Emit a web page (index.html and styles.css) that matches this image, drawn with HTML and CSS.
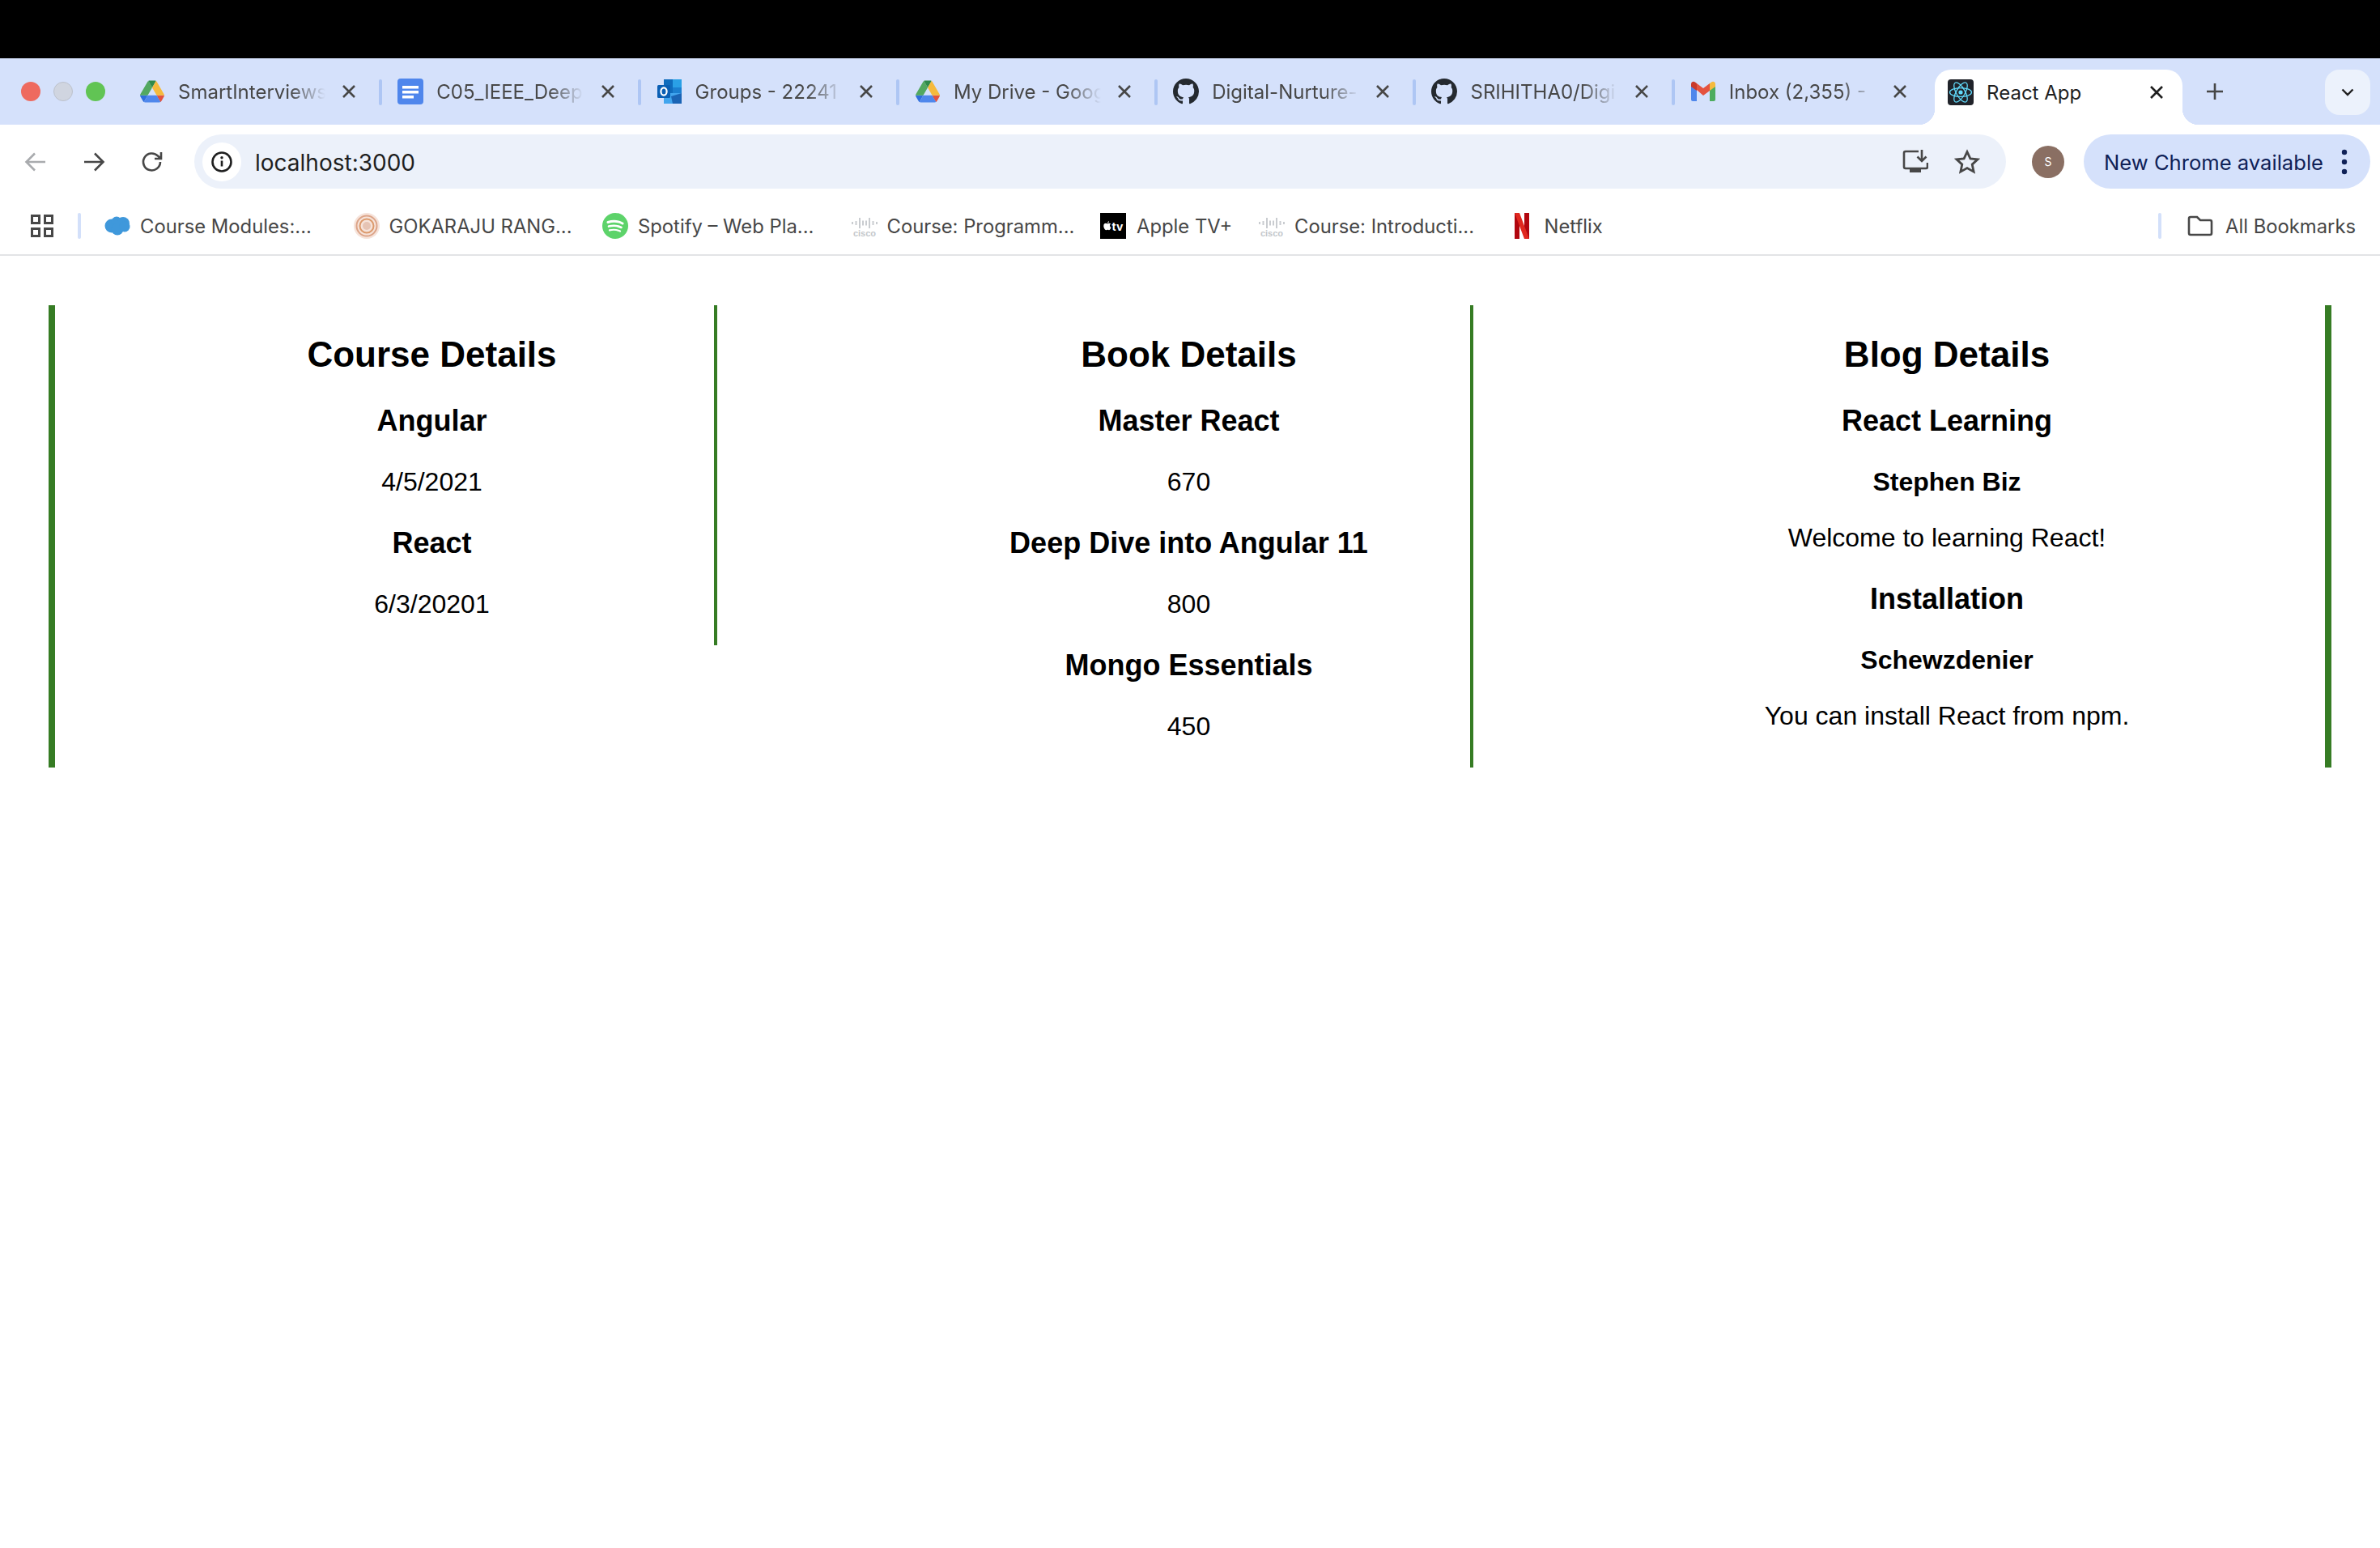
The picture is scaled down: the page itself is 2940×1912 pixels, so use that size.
FILE: index.html
```html
<!DOCTYPE html>
<html lang="en">
<head>
    <meta charset="UTF-8">
    <meta name="viewport" content="width=device-width, initial-scale=1.0">
    <title>React App</title>
    <link rel="stylesheet" href="styles.css">
</head>
<body>
    <!-- icon sprite -->
    <svg class="sprite" aria-hidden="true">
        <symbol id="i-drive" viewBox="-3 -3 93.3 84">
            <path d="m6.6 66.85 3.85 6.65c.8 1.4 1.95 2.5 3.3 3.3l13.75-23.8h-27.5c0 1.55.4 3.1 1.2 4.5z" fill="#2f6fdc"/>
            <path d="m43.65 25-13.75-23.8c-1.35.8-2.5 1.9-3.3 3.3l-25.4 44a9.06 9.06 0 0 0 -1.2 4.5h27.5z" fill="#52a860"/>
            <path d="m73.55 76.8c1.35-.8 2.5-1.9 3.3-3.3l1.6-2.75 7.65-13.25c.8-1.4 1.2-2.95 1.2-4.5h-27.502l5.852 11.5z" fill="#e4523f"/>
            <path d="m43.65 25 13.75-23.8c-1.35-.8-2.9-1.2-4.5-1.2h-18.5c-1.6 0-3.15.45-4.5 1.2z" fill="#2f8a4a"/>
            <path d="m59.8 53h-32.3l-13.75 23.8c1.35.8 2.9 1.2 4.5 1.2h50.8c1.6 0 3.15-.45 4.5-1.2z" fill="#4f87ec"/>
            <path d="m73.4 26.5-12.7-22c-.8-1.4-1.95-2.5-3.3-3.3l-13.75 23.8 16.15 28h27.45c0-1.55-.4-3.1-1.2-4.5z" fill="#f5ba3d"/>
        </symbol>
        <symbol id="i-docs" viewBox="0 0 32 32">
            <rect x="0" y="0" width="32" height="32" rx="4" fill="#4f86ec"/>
            <rect x="6" y="9" width="20" height="3.5" fill="#fff"/>
            <rect x="6" y="15" width="20" height="3.5" fill="#fff"/>
            <rect x="6" y="21" width="14" height="3.5" fill="#fff"/>
        </symbol>
        <symbol id="i-outlook" viewBox="0 0 32 32">
            <rect x="9" y="1" width="11" height="10" fill="#0f6cbd"/>
            <rect x="20" y="1" width="11" height="10" fill="#2aa0e6"/>
            <rect x="9" y="11" width="11" height="10" fill="#0f6cbd"/>
            <rect x="20" y="11" width="11" height="10" fill="#1b7fd0"/>
            <path d="M9 18h22v13H9z" fill="#41a5ee"/>
            <path d="M18 22l13-4v13H20z" fill="#1a64b5"/>
            <rect x="1" y="8" width="16" height="16" rx="1.5" fill="#0a5fb4"/>
            <ellipse cx="9" cy="16" rx="3.6" ry="4.6" fill="none" stroke="#fff" stroke-width="2.2"/>
        </symbol>
        <symbol id="i-github" viewBox="0 0 16 16">
            <path fill="#24292f" d="M8 0C3.58 0 0 3.58 0 8c0 3.54 2.29 6.53 5.47 7.59.4.07.55-.17.55-.38 0-.19-.01-.82-.01-1.49-2.01.37-2.53-.49-2.69-.94-.09-.23-.48-.94-.82-1.13-.28-.15-.68-.52-.01-.53.63-.01 1.08.58 1.23.82.72 1.21 1.87.87 2.33.66.07-.52.28-.87.51-1.07-1.78-.2-3.64-.89-3.64-3.95 0-.87.31-1.59.82-2.15-.08-.2-.36-1.02.08-2.12 0 0 .67-.21 2.2.82.64-.18 1.32-.27 2-.27.68 0 1.36.09 2 .27 1.53-1.04 2.2-.82 2.2-.82.44 1.1.16 1.92.08 2.12.51.56.82 1.27.82 2.15 0 3.07-1.87 3.75-3.65 3.95.29.25.54.73.54 1.48 0 1.07-.01 1.93-.01 2.2 0 .21.15.46.55.38A8.013 8.013 0 0016 8c0-4.42-3.58-8-8-8z"/>
        </symbol>
        <symbol id="i-gmail" viewBox="0 0 32 26">
            <path d="M1 25V6l7 5v14H3a2 2 0 0 1-2-2z" fill="#4f87ec"/>
            <path d="M31 25V6l-7 5v14h5a2 2 0 0 0 2-2z" fill="#4dac5f"/>
            <path d="M24 3v9l7-5V4c0-3-3-4-5-2.5z" fill="#f5ba3d"/>
            <path d="M8 11V3l8 6 8-6v9l-8 6z" fill="#e4523f"/>
            <path d="M1 7V4c0-3 3-4 5-2.5L8 3v9z" fill="#c9392b"/>
        </symbol>
        <symbol id="i-react" viewBox="0 0 32 32">
            <rect width="32" height="32" rx="4" fill="#20232a"/>
            <g fill="none" stroke="#61dafb" stroke-width="1.3">
                <ellipse cx="16" cy="16" rx="13.5" ry="5.4"/>
                <ellipse cx="16" cy="16" rx="13.5" ry="5.4" transform="rotate(60 16 16)"/>
                <ellipse cx="16" cy="16" rx="13.5" ry="5.4" transform="rotate(120 16 16)"/>
            </g>
            <circle cx="16" cy="16" r="2.6" fill="#61dafb"/>
        </symbol>
        <symbol id="i-close" viewBox="0 0 22 22">
            <path d="M4 4l14 14M18 4L4 18" fill="none" stroke="currentColor" stroke-width="2.6"/>
        </symbol>
        <symbol id="i-salesforce" viewBox="0 0 32 24">
            <g fill="#3f98db">
                <circle cx="9" cy="12" r="8.5"/>
                <circle cx="15" cy="7" r="6.5"/>
                <circle cx="23" cy="9" r="8"/>
                <circle cx="16" cy="16" r="7.5"/>
                <circle cx="25" cy="13" r="6.5"/>
            </g>
        </symbol>
        <symbol id="i-seal" viewBox="0 0 32 32">
            <circle cx="16" cy="16" r="16" fill="#f6e3da"/>
            <circle cx="16" cy="16" r="12.500" fill="none" stroke="#dca488" stroke-width="2"/>
            <circle cx="16" cy="16" r="8.500" fill="none" stroke="#dc9a6c" stroke-width="2"/>
            <circle cx="16" cy="16" r="5" fill="#e6c4b4"/>
        </symbol>
        <symbol id="i-spotify" viewBox="0 0 32 32">
            <circle cx="16" cy="16" r="16" fill="#5dd36a"/>
            <g fill="none" stroke="#fff" stroke-linecap="round">
                <path d="M7 11.5c6-1.8 13-1.3 18 1.5" stroke-width="3"/>
                <path d="M8 16.6c5.2-1.4 11-1 15.5 1.4" stroke-width="2.6"/>
                <path d="M9 21.4c4.4-1.1 9-.8 13 1.2" stroke-width="2.2"/>
            </g>
        </symbol>
        <symbol id="i-cisco" viewBox="0 0 32 32">
            <g stroke="#c9ccd0" stroke-width="2">
                <path d="M1 11v3M5.500 10v5M10 6v13M14 9.500v6M18 9.500v6M22 6v13M26.500 10v5M31 11v3"/>
            </g>
            <text class="cisco-word" x="16" y="29" text-anchor="middle">cisco</text>
        </symbol>
        <symbol id="i-netflix" viewBox="0 0 18 32">
            <path d="M0 0h6v32l-6 0z" fill="#b1060f"/>
            <path d="M12 0h6v32h-6z" fill="#b1060f"/>
            <path d="M0 0h6l12 32h-6z" fill="#e0281f"/>
        </symbol>
    </svg>

    <header class="browser">
        <div class="notch-bar"></div>

        <div class="tab-strip">
            <div class="window-lights">
                <span class="light light-red"></span>
                <span class="light light-grey"></span>
                <span class="light light-green"></span>
            </div>
            <div class="tab">
                <svg class="favicon"><use href="#i-drive"/></svg>
                <span class="tab-title">SmartInterviews</span>
                <svg class="tab-close"><use href="#i-close"/></svg>
            </div>
            <div class="tab">
                <svg class="favicon"><use href="#i-docs"/></svg>
                <span class="tab-title">C05_IEEE_Deep</span>
                <svg class="tab-close"><use href="#i-close"/></svg>
            </div>
            <div class="tab">
                <svg class="favicon"><use href="#i-outlook"/></svg>
                <span class="tab-title">Groups - 22241</span>
                <svg class="tab-close"><use href="#i-close"/></svg>
            </div>
            <div class="tab">
                <svg class="favicon"><use href="#i-drive"/></svg>
                <span class="tab-title">My Drive - Goog</span>
                <svg class="tab-close"><use href="#i-close"/></svg>
            </div>
            <div class="tab">
                <svg class="favicon"><use href="#i-github"/></svg>
                <span class="tab-title">Digital-Nurture-</span>
                <svg class="tab-close"><use href="#i-close"/></svg>
            </div>
            <div class="tab">
                <svg class="favicon"><use href="#i-github"/></svg>
                <span class="tab-title">SRIHITHA0/Digi</span>
                <svg class="tab-close"><use href="#i-close"/></svg>
            </div>
            <div class="tab tab-last">
                <svg class="favicon"><use href="#i-gmail"/></svg>
                <span class="tab-title">Inbox (2,355) -</span>
                <svg class="tab-close"><use href="#i-close"/></svg>
            </div>
            <div class="tab tab-active">
                <svg class="favicon"><use href="#i-react"/></svg>
                <span class="tab-title">React App</span>
                <svg class="tab-close"><use href="#i-close"/></svg>
            </div>
            <svg class="new-tab" viewBox="0 0 20 20">
                <path d="M10 0v20M0 10h20" fill="none" stroke="#474747" stroke-width="2.6"/>
            </svg>
            <div class="tab-search">
                <svg viewBox="0 0 16 10"><path d="M1.5 1.5L8 8l6.5-6.5" fill="none" stroke="#1f1f1f" stroke-width="2.4"/></svg>
            </div>
        </div>

        <div class="toolbar">
            <div class="nav-btn nav-off">
                <svg viewBox="0 0 28 28"><path d="M26 14H3M13 3.500L2.500 14 13 24.500" fill="none" stroke="currentColor" stroke-width="2.600"/></svg>
            </div>
            <div class="nav-btn">
                <svg viewBox="0 0 28 28"><path d="M2 14h23M15 3.500L25.500 14 15 24.500" fill="none" stroke="currentColor" stroke-width="2.600"/></svg>
            </div>
            <div class="nav-btn">
                <svg viewBox="0 0 28 28"><path d="M24 14a10.500 10.500 0 1 1-3-7.400L25 10M25 2v8h-8" fill="none" stroke="currentColor" stroke-width="2.600"/></svg>
            </div>
            <div class="address-bar">
                <span class="site-info">
                    <svg viewBox="0 0 28 28">
                        <circle cx="14" cy="14" r="11.500" fill="none" stroke="#1f1f1f" stroke-width="2.600"/>
                        <path d="M14 12.500v7" stroke="#1f1f1f" stroke-width="2.600"/>
                        <circle cx="14" cy="8.800" r="1.700" fill="#1f1f1f"/>
                    </svg>
                </span>
                <span class="address-text">localhost:3000</span>
                <svg class="bar-icon" viewBox="0 0 32 32">
                    <path d="M20 3H4a2 2 0 0 0-2 2v17a2 2 0 0 0 2 2h25a2 2 0 0 0 2-2v-5" fill="none" stroke="#474747" stroke-width="2.600"/>
                    <path d="M24 1v13M18.500 9.500L24 15l5.500-5.500" fill="none" stroke="#474747" stroke-width="2.600"/>
                    <rect x="9" y="24" width="14" height="5" fill="#474747"/>
                </svg>
                <svg class="bar-icon" viewBox="0 0 32 32">
                    <path d="M16 3.500l3.900 8.400 9.100 1-6.800 6.200 1.900 9-8.100-4.600-8.100 4.600 1.900-9L3 12.900l9.100-1z" fill="none" stroke="#474747" stroke-width="2.800"/>
                </svg>
            </div>
            <span class="avatar">S</span>
            <div class="update-chip">
                <span>New Chrome available</span>
                <svg viewBox="0 0 8 32"><g fill="#0f2157"><circle cx="4" cy="4" r="3.200"/><circle cx="4" cy="16" r="3.200"/><circle cx="4" cy="28" r="3.200"/></g></svg>
            </div>
        </div>

        <nav class="bookmarks">
            <svg class="apps-icon" viewBox="0 0 28 28">
                <g fill="none" stroke="#474747" stroke-width="3">
                    <rect x="1.500" y="1.500" width="9" height="9"/>
                    <rect x="17.500" y="1.500" width="9" height="9"/>
                    <rect x="1.500" y="17.500" width="9" height="9"/>
                    <rect x="17.500" y="17.500" width="9" height="9"/>
                </g>
            </svg>
            <span class="bm-sep"></span>
            <a class="bm-item bm-first"><svg class="bm-icon"><use href="#i-salesforce"/></svg>Course Modules:...</a>
            <a class="bm-item"><svg class="bm-icon"><use href="#i-seal"/></svg>GOKARAJU RANG...</a>
            <a class="bm-item"><svg class="bm-icon"><use href="#i-spotify"/></svg>Spotify – Web Pla...</a>
            <a class="bm-item"><svg class="bm-icon"><use href="#i-cisco"/></svg>Course: Programm...</a>
            <a class="bm-item bm-auto">
                <span class="tv-icon">
                    <svg viewBox="0 0 10 12"><path d="M7.300 2.700c-1 0-1.600.6-2.300.6s-1.300-.6-2.200-.6C1.500 2.700.3 3.800.3 6c0 2.500 1.700 5.200 3 5.200.7 0 1-.4 1.800-.4s1 .4 1.800.4c1 0 2-1.700 2.600-3.200-1.800-.7-2-3.900-.2-4.700-.5-.4-1.200-.6-2-.6zM5 2.500C5 1.300 6 .3 7 .2c.1 1.200-1 2.400-2 2.300z" fill="#fff"/></svg>
                    <span>tv</span>
                </span>
                Apple TV+
            </a>
            <a class="bm-item"><svg class="bm-icon"><use href="#i-cisco"/></svg>Course: Introducti...</a>
            <a class="bm-item bm-auto bm-netflix"><svg class="bm-icon"><use href="#i-netflix"/></svg>Netflix</a>
            <span class="bm-sep bm-sep-right"></span>
            <a class="bm-all">
                <svg class="bm-icon" viewBox="0 0 32 28"><path d="M2 5a2 2 0 0 1 2-2h8l4 4h12a2 2 0 0 1 2 2v14a2 2 0 0 1-2 2H4a2 2 0 0 1-2-2z" fill="none" stroke="#474747" stroke-width="2.600"/></svg>
                All Bookmarks
            </a>
        </nav>
    </header>

    <main class="details">
        <section class="col col-course">
            <h2>Course Details</h2>
            <h3>Angular</h3>
            <p>4/5/2021</p>
            <h3>React</h3>
            <p>6/3/20201</p>
        </section>
        <section class="col col-book">
            <h2>Book Details</h2>
            <h3>Master React</h3>
            <p>670</p>
            <h3>Deep Dive into Angular 11</h3>
            <p>800</p>
            <h3>Mongo Essentials</h3>
            <p>450</p>
        </section>
        <section class="col col-blog">
            <h2>Blog Details</h2>
            <h3>React Learning</h3>
            <h4>Stephen Biz</h4>
            <p>Welcome to learning React!</p>
            <h3>Installation</h3>
            <h4>Schewzdenier</h4>
            <p>You can install React from npm.</p>
        </section>
    </main>
</body>
</html>
```

FILE: styles.css
```css
* {
    box-sizing: border-box;
}

body {
    margin: 0;
    background-color: #fff;
    color: #000;
    font-family: "Liberation Sans", Arial, sans-serif;
}

.sprite {
    display: none;
}

/* browser chrome */
.browser {
    font-family: Inter, "Noto Sans", sans-serif;
    color: #474747;
}

.notch-bar {
    height: 72px;
    background-color: #000;
}

.tab-strip {
    display: flex;
    align-items: flex-start;
    height: 82px;
    background-color: #d5e1fb;
}

.window-lights {
    display: flex;
    gap: 16px;
    width: 151px;
    padding: 29px 0 0 26px;
}

.light {
    width: 24px;
    height: 24px;
    border-radius: 50%;
}

.light-red {
    background-color: #ee6a5f;
}

.light-grey {
    background-color: #d0d5e0;
    border: 1px solid #bcc1cc;
}

.light-green {
    background-color: #61c454;
}

.tab {
    position: relative;
    display: flex;
    align-items: center;
    flex: none;
    width: 319.300px;
    height: 54px;
    margin-top: 14px;
    padding: 0 28px 0 21px;
    font-size: 24px;
}

.tab::after {
    content: "";
    position: absolute;
    top: 12px;
    right: -2px;
    width: 4px;
    height: 32px;
    border-radius: 2px;
    background-color: #aec6f4;
}

.tab-last::after {
    display: none;
}

.favicon {
    flex: none;
    width: 32px;
    height: 32px;
    margin-right: 16px;
}

.tab-title {
    flex: 1;
    min-width: 0;
    margin-right: 10px;
    overflow: hidden;
    white-space: nowrap;
    -webkit-mask-image: linear-gradient(to right, #000 138px, transparent 182px);
    mask-image: linear-gradient(to right, #000 138px, transparent 182px);
}

.tab-close {
    flex: none;
    width: 22px;
    height: 22px;
}

.tab-active {
    width: 306px;
    height: 68px;
    margin-left: 4px;
    padding: 0 21px 12px 16px;
    border-radius: 20px 20px 0 0;
    background-color: #fff;
    color: #1f1f1f;
}

.tab-active .tab-title {
    -webkit-mask-image: none;
    mask-image: none;
}

/* flared feet of the active tab */
.tab-active::before,
.tab-active::after {
    content: "";
    position: absolute;
    top: auto;
    bottom: 0;
    width: 20px;
    height: 20px;
    border-radius: 0;
}

.tab-active::before {
    left: -20px;
    background: radial-gradient(circle at 0 0, #d5e1fb 20px, #fff 20.5px);
}

.tab-active::after {
    right: -20px;
    background: radial-gradient(circle at 100% 0, #d5e1fb 20px, #fff 20.5px);
}

.new-tab {
    flex: none;
    width: 20px;
    height: 20px;
    margin: 31px 0 0 30px;
}

.tab-search {
    display: flex;
    align-items: center;
    justify-content: center;
    width: 56px;
    height: 56px;
    margin: 14px 12px 0 auto;
    border-radius: 18px;
    background-color: #ecf2fc;
}

.tab-search svg {
    width: 16px;
    height: 10px;
}

.toolbar {
    display: flex;
    align-items: center;
    height: 92px;
    padding: 12px 12px 13px 8px;
    border-radius: 18px 18px 0 0;
    background-color: #fff;
}

.nav-btn {
    display: flex;
    align-items: center;
    justify-content: center;
    flex: none;
    width: 72px;
    color: #474747;
}

.nav-btn svg {
    width: 28px;
    height: 28px;
}

.nav-off {
    color: #a9abae;
}

.address-bar {
    display: flex;
    align-items: center;
    flex: 1;
    height: 67px;
    margin-left: 16px;
    padding: 0 32px 0 10px;
    border-radius: 34px;
    background-color: #ecf1fa;
}

.site-info {
    display: flex;
    align-items: center;
    justify-content: center;
    flex: none;
    width: 48px;
    height: 48px;
    border-radius: 50%;
    background-color: #fff;
}

.site-info svg {
    width: 28px;
    height: 28px;
}

.address-text {
    flex: 1;
    margin-left: 17px;
    padding-top: 2px;
    font-size: 28px;
    color: #1f1f1f;
}

.bar-icon {
    flex: none;
    width: 32px;
    height: 32px;
    margin-left: 32px;
}

.avatar {
    display: flex;
    align-items: center;
    justify-content: center;
    flex: none;
    width: 40px;
    height: 40px;
    margin: 0 24px 0 32px;
    border-radius: 50%;
    background-color: #8a6f63;
    color: #fff;
    font-size: 14px;
}

.update-chip {
    display: flex;
    align-items: center;
    flex: none;
    width: 354px;
    height: 67px;
    padding: 0 28px 0 25px;
    border-radius: 34px;
    background-color: #d5e1fb;
    color: #0f2157;
    font-size: 25.600px;
}

.update-chip span {
    flex: 1;
    padding-top: 2px;
    white-space: nowrap;
}

.update-chip svg {
    flex: none;
    width: 8px;
    height: 32px;
}

.bookmarks {
    display: flex;
    align-items: center;
    height: 70px;
    padding: 0 30px 2px 38px;
    border-bottom: 2px solid #e3e4e6;
    background-color: #fff;
    font-size: 23.800px;
}

.apps-icon {
    flex: none;
    width: 28px;
    height: 28px;
}

.bm-sep {
    flex: none;
    width: 4px;
    height: 32px;
    margin-left: 30px;
    border-radius: 2px;
    background-color: #d3e0fa;
}

.bm-item {
    display: flex;
    align-items: center;
    flex: none;
    width: 307.500px;
    white-space: nowrap;
}

.bm-first {
    margin-left: 29px;
}

.bm-auto {
    width: 196px;
}

.bm-netflix {
    margin-left: 1px;
}

.bm-icon {
    flex: none;
    width: 32px;
    height: 32px;
    margin-right: 12px;
}

.cisco-word {
    fill: #c4c7cb;
    font-family: "Liberation Sans", sans-serif;
    font-size: 11px;
    font-weight: 700;
}

.tv-icon {
    display: flex;
    align-items: center;
    justify-content: center;
    flex: none;
    gap: 1px;
    width: 32px;
    height: 32px;
    margin-right: 13px;
    background-color: #000;
    color: #fff;
    font-size: 14px;
    font-weight: 700;
}

.tv-icon svg {
    width: 10px;
    height: 12px;
}

.bm-sep-right {
    margin-left: auto;
}

.bm-all {
    display: flex;
    align-items: center;
    margin-left: 32px;
    white-space: nowrap;
}

.bm-all .bm-icon {
    height: 28px;
    margin-right: 15px;
}

/* page content */
.details {
    display: grid;
    grid-template-columns: 818px 934px 1fr;
    align-items: start;
    margin: 61px 60px 0;
    border-left: 8px solid #367c24;
    border-right: 8px solid #367c24;
    text-align: center;
}

.col-course {
    padding-left: 117px;
    border-right: 4px solid #367c24;
}

.col-book {
    padding-left: 235px;
    border-right: 4px solid #367c24;
}

.col-blog {
    padding-left: 118px;
}

h2 {
    margin: 36px 0;
    font-size: 44px;
}

h3 {
    margin: 36px 0;
    font-size: 36px;
}

h4 {
    margin: 32px 0;
    font-size: 32px;
}

p {
    margin: 32px 0;
    font-size: 32px;
}
```
